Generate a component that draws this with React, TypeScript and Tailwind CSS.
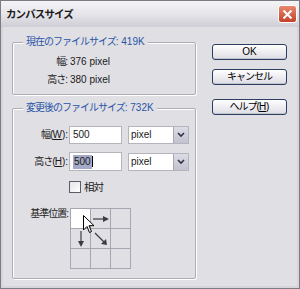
import React from 'react';

const J: React.FC<{ children: React.ReactNode; className?: string }> = ({ children, className = '' }) => (
  <span className={`tracking-[-1px] ${className}`}>{children}</span>
);

const Btn: React.FC<{ children: React.ReactNode; className?: string }> = ({ children, className = '' }) => (
  <div
    className={`h-[16px] w-[75px] rounded-[3px] border border-[#2c3e62] bg-gradient-to-b from-[#ffffff] to-[#dcdce4] flex items-center justify-center text-black shadow-[inset_0_-1px_0_#c4c4cc] ${className}`}
  >
    {children}
  </div>
);

const Unit: React.FC = () => (
  <div className="ml-[6px] h-[18px] w-[61px] border border-[#b4b4bc] bg-white flex items-center">
    <span className="flex-1 pl-[2px]">pixel</span>
    <div className="h-full w-[15px] bg-gradient-to-b from-[#dcdce6] to-[#c2c2d0] border-l border-[#a8a8b4] flex items-center justify-center">
      <svg width="8" height="6" viewBox="0 0 8 6">
        <path d="M1 1 L4 4 L7 1" stroke="#303040" strokeWidth="1.6" fill="none" />
      </svg>
    </div>
  </div>
);

export default function App() {
  return (
    <div
      className="w-[300px] h-[289px] bg-[#e0dfe4] flex flex-col border border-[#7c7b84] text-[10px] leading-[14px] text-[#1a1a1a]"
      style={{ fontFamily: '"Liberation Sans", "Noto Sans CJK JP", sans-serif' }}
    >
      <div className="h-[26px] shrink-0 flex items-center justify-between pl-[5px] pr-[2px] bg-gradient-to-b from-[#f4f4f6] via-[#e6e5ea] to-[#cfced6]">
        <span className="font-bold text-[10.5px] tracking-[-0.9px] text-[#1a1a1a]">カンバスサイズ</span>
        <div className="h-[18px] w-[19px] rounded-[3px] border border-white bg-gradient-to-b from-[#e8876e] to-[#c4412a] flex items-center justify-center">
          <svg width="11" height="11" viewBox="0 0 11 11">
            <path d="M1.5 1.5 L9.5 9.5 M9.5 1.5 L1.5 9.5" stroke="#fff" strokeWidth="2" />
          </svg>
        </div>
      </div>

      <div className="flex-1 flex border-x-[2px] border-b-[2px] border-[#d6d5dc] pl-[9px] pt-[8px]">
        <div className="w-[184px] flex flex-col">
          {/* current size */}
          <div className="mt-[7px] h-[53px] border border-[#aeadb6] shadow-[1px_1px_0_#ffffff,inset_1px_1px_0_#ffffff] rounded-[2px]">
            <div className="-mt-[8px] ml-[10px] w-fit px-[3px] bg-[#e0dfe4] text-[#2a55a6]">
              <J>現在のファイルサイズ</J>: 419K
            </div>
            <div className="grid grid-cols-[55px_1fr] mt-[4px] leading-[18px]">
              <div className="text-right"><J>幅</J>:</div>
              <div className="pl-[2px]">376 pixel</div>
              <div className="text-right"><J>高さ</J>:</div>
              <div className="pl-[2px]">380 pixel</div>
            </div>
          </div>

          {/* new size */}
          <div className="mt-[13px] h-[171px] border border-[#aeadb6] shadow-[1px_1px_0_#ffffff,inset_1px_1px_0_#ffffff] rounded-[2px]">
            <div className="-mt-[8px] ml-[10px] w-fit px-[3px] bg-[#e0dfe4] text-[#2a55a6]">
              <J>変更後のファイルサイズ</J>: 732K
            </div>
            <div className="mt-[11px] flex items-center">
              <div className="w-[55px] text-right">
                <J>幅(</J><span className="underline">W</span>):
              </div>
              <div className="ml-[1px] h-[18px] w-[53px] border border-[#b4b4bc] bg-white flex items-center pl-[3px]">500</div>
              <Unit />
            </div>
            <div className="mt-[8px] flex items-center">
              <div className="w-[55px] text-right">
                <J>高さ(</J><span className="underline">H</span>):
              </div>
              <div className="ml-[1px] h-[19px] w-[53px] border border-[#b4b4bc] bg-white flex items-center pl-[3px]">
                <span className="bg-[#a3a9c6] px-[1px]">500</span>
                <span className="w-[1px] h-[11px] bg-black" />
              </div>
              <Unit />
            </div>
            <div className="mt-[9px] flex items-center pl-[56px]">
              <div className="h-[12px] w-[12px] border border-[#5c5c68] bg-gradient-to-br from-[#e4e4ea] to-white" />
              <J className="ml-[3px] text-[10.5px]">相対</J>
            </div>
            <div className="mt-[14px] flex items-start">
              <div className="w-[56px] text-right -mt-[1px]">
                <J>基準位置</J>:
              </div>
              <div className="relative ml-[1px] grid grid-cols-[20px_20px_20px] grid-rows-[20px_20px_20px] border-l border-t border-[#a6a6b0]">
                {Array.from({ length: 9 }).map((_, i) => (
                  <div
                    key={i}
                    className={`border-r border-b border-[#a6a6b0] flex items-center justify-center ${i === 0 ? 'bg-white' : ''}`}
                  >
                    {i === 1 && (
                      <svg width="18" height="8" viewBox="0 0 18 8">
                        <path d="M1 4 L12 4" stroke="#3c3c44" strokeWidth="1.2" />
                        <path d="M11 1 L17 4 L11 7 Z" fill="#3c3c44" />
                      </svg>
                    )}
                    {i === 3 && (
                      <svg width="8" height="18" viewBox="0 0 8 18">
                        <path d="M4 1 L4 12" stroke="#3c3c44" strokeWidth="1.2" />
                        <path d="M1 11 L4 17 L7 11 Z" fill="#3c3c44" />
                      </svg>
                    )}
                    {i === 4 && (
                      <svg width="16" height="16" viewBox="0 0 16 16">
                        <path d="M2 2 L11 11" stroke="#3c3c44" strokeWidth="1.2" />
                        <path d="M8 13 L14 14 L13 8 Z" fill="#3c3c44" />
                      </svg>
                    )}
                  </div>
                ))}
                <svg className="absolute left-[12px] top-[6px]" width="12" height="19" viewBox="0 0 12 19">
                  <path
                    d="M0.5 0.5 L0.5 15 L4 11.5 L6.5 17.5 L8.5 16.5 L6 10.7 L11 10.7 Z"
                    fill="#fff"
                    stroke="#000"
                    strokeWidth="1"
                    strokeLinejoin="round"
                  />
                </svg>
              </div>
            </div>
          </div>
        </div>

        <div className="ml-[16px] flex flex-col pt-[9px]">
          <Btn>OK</Btn>
          <Btn className="mt-[9px]"><J>キャンセル</J></Btn>
          <Btn className="mt-[14px]">
            <J>ヘルプ(</J><span className="underline">H</span>)
          </Btn>
        </div>
      </div>
    </div>
  );
}
